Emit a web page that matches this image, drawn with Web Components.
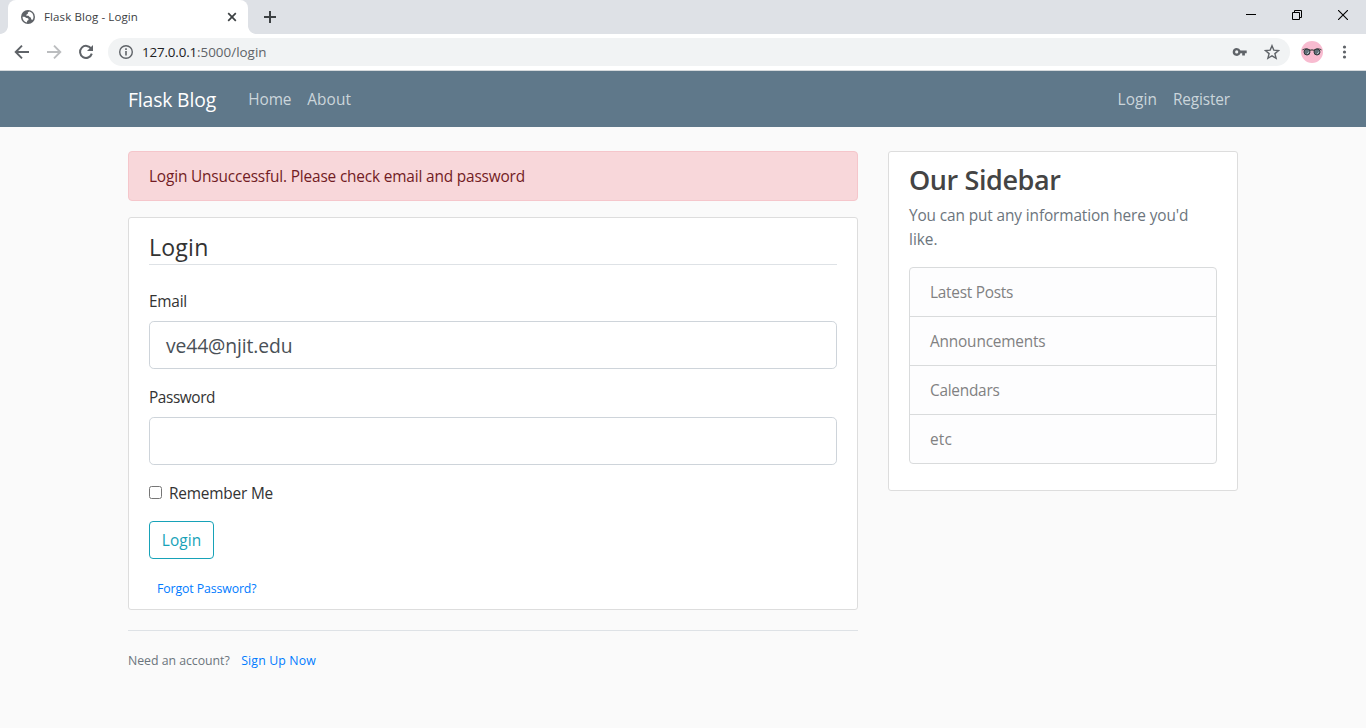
<!DOCTYPE html>
<html lang="en">
<head>
<meta charset="utf-8">
<title>Flask Blog - Login</title>
<style>
html, body { margin: 0; height: 100%; overflow: hidden; background: #fafafa; }
body { font-family: "Open Sans", "Noto Sans", sans-serif; color: #333; }
</style>
</head>
<body>
<browser-chrome></browser-chrome>
<site-nav></site-nav>
<blog-layout>
  <flash-alert><fit-text w="376">Login Unsuccessful. Please check email and password</fit-text></flash-alert>
  <login-card></login-card>
  <account-note></account-note>
  <side-bar slot="side"></side-bar>
</blog-layout>
<script>
const define = (name, html, setup) => {
  customElements.define(name, class extends HTMLElement {
    connectedCallback() {
      if (this.shadowRoot) return;
      const t = document.createElement('template');
      t.innerHTML = html;
      this.attachShadow({ mode: 'open' }).append(t.content.cloneNode(true));
      if (setup) setup(this);
    }
  });
};

// Inline text tracked to a given advance width.
define('fit-text', `<style>
:host { display: inline-block; flex: none; white-space: pre; }
</style><slot></slot>`, el => {
  const want = parseFloat(el.getAttribute('w'));
  const n = el.textContent.length;
  const track = () => {
    el.style.letterSpacing = '0px';
    const have = el.getBoundingClientRect().width;
    if (have > 0) {
      el.style.letterSpacing = ((want - have) / n) + 'px';
      el.style.width = want + 'px';
    }
  };
  requestAnimationFrame(track);
});

define('browser-chrome', `<style>
:host { display: block; height: 71px; background: #fff; color: #3c4043; }
svg { display: block; flex: none; }
.tabs { height: 34px; background: #dee1e6; display: flex; align-items: center; }
.tab { position: relative; box-sizing: border-box; width: 240px; height: 34px; margin-left: 8px; padding: 0 9px 0 13px; display: flex; align-items: center; background: #fff; border-radius: 8px 8px 0 0; font-size: 11.5px; }
.tab::before, .tab::after { content: ""; position: absolute; bottom: 0; width: 8px; height: 8px; }
.tab::before { left: -8px; background: radial-gradient(circle at 0 0, #dee1e6 7.5px, #fff 8.2px); }
.tab::after { right: -8px; background: radial-gradient(circle at 100% 0, #dee1e6 7.5px, #fff 8.2px); }
.tab fit-text { margin-left: 9px; padding-bottom: 2px; }
.spacer { flex: 1; }
.win { display: flex; width: 138px; height: 30px; align-items: center; align-self: flex-start; }
.win svg { margin: 0 18px; }
.bar { height: 36px; display: flex; align-items: center; border-bottom: 1px solid #d5d9dc; }
.omni { flex: 1; box-sizing: border-box; height: 28px; border-radius: 14px; background: #f1f3f4; display: flex; align-items: center; padding: 0 10px; font-size: 13.4px; color: #202124; }
.url { margin-left: 8px; flex: 1; display: flex; line-height: 20px; }
.url .rest { color: #5f6368; }
</style>
<div class="tabs">
  <div class="tab">
    <svg width="14" height="14" viewBox="0 0 14 14"><circle cx="7" cy="7" r="7" fill="#5f6368"/><path d="M8.300 1.500C7 2.200 6.300 2.900 7 3.500c.3.500-1.500.7-1.700 1.400-.1.700.4.900 1.300.8 1-.1 1.400.3 1.700 1 .4.700 1.400.4 1.700 1.200.2.600-.1 1.300.5 1.700l.9.4c.8-1 1.100-2 1.100-3.100C12.500 4.200 10.800 2 8.300 1.500zM1.500 6.700c0 2.800 1.700 5 4.400 5.700l.3-1.600c.9-.3 1.500-.8 1.300-1.800-.2-.9-1.100-1-2-1.100C4.500 7.800 4.300 6.800 3.300 6.700z" fill="#fff"/></svg>
    <fit-text w="94">Flask Blog - Login</fit-text>
    <span class="spacer"></span>
    <svg width="14" height="14" viewBox="0 0 14 14"><path d="M3.200 3.200l7.600 7.600M10.800 3.200l-7.600 7.600" stroke="#3c4043" stroke-width="1.700"/></svg>
  </div>
  <svg style="margin-left:15px" width="14" height="14" viewBox="0 0 14 14"><path d="M7 1v12M1 7h12" stroke="#3c4043" stroke-width="2"/></svg>
  <div class="spacer"></div>
  <div class="win">
    <svg width="10" height="10" viewBox="0 0 10 10"><path d="M0 4.500h10" stroke="#000"/></svg>
    <svg width="10" height="10" viewBox="0 0 10 10"><path d="M.5 2.500h7v7h-7zM2.500 2.500v-2h7v7h-2" fill="none" stroke="#000"/></svg>
    <svg width="10" height="10" viewBox="0 0 10 10"><path d="M0 0l10 10M10 0L0 10" stroke="#000" stroke-width="1.100"/></svg>
  </div>
</div>
<div class="bar">
  <svg style="margin-left:14px" width="16" height="16" viewBox="0 0 16 16"><path d="M15 8H2M8 1.700L1.700 8 8 14.300" fill="none" stroke="#5f6368" stroke-width="1.900"/></svg>
  <svg style="margin-left:16px" width="16" height="16" viewBox="0 0 16 16"><path d="M1 8h13M8 1.700L14.300 8 8 14.300" fill="none" stroke="#bbbdbf" stroke-width="1.900"/></svg>
  <svg style="margin-left:16px" width="16" height="16" viewBox="0 0 16 16"><path d="M13.200 4.800A6 6 0 1 0 13.800 9.600" fill="none" stroke="#5f6368" stroke-width="2"/><path d="M15 1v6H9z" fill="#5f6368"/></svg>
  <div class="omni" style="margin-left:14px">
    <svg width="16" height="16" viewBox="0 0 16 16"><circle cx="8" cy="8" r="6.300" fill="none" stroke="#5f6368" stroke-width="1.400"/><path d="M8 7v4.500M8 4.300v1.600" stroke="#5f6368" stroke-width="1.600"/></svg>
    <div class="url"><fit-text w="55">127.0.0.1</fit-text><fit-text class="rest" w="69.500">:5000/login</fit-text></div>
    <svg width="16" height="16" viewBox="0 0 16 16"><path d="M4.700 3.900a4 4 0 1 0 3.800 5.300h1.700v2.400h2.700V9.200h1.800V6.400H8.500a4 4 0 0 0-3.800-2.500zm0 2.400a1.600 1.600 0 1 1 0 3.200 1.600 1.600 0 0 1 0-3.200z" fill="#5f6368" fill-rule="evenodd"/></svg>
    <svg style="margin-left:16px" width="16" height="16" viewBox="0 0 16 16"><path d="M8 1.700l1.800 4.400 4.800.4-3.700 3.100 1.200 4.700L8 11.800l-4.100 2.500 1.200-4.700L1.400 6.500l4.800-.4z" fill="none" stroke="#5f6368" stroke-width="1.400"/></svg>
  </div>
  <svg style="margin-left:11px" width="22" height="22" viewBox="0 0 22 22"><circle cx="11" cy="11" r="11" fill="#f8bbd0"/><path d="M1.500 9.200Q3 7.800 5 7.800T9.300 9.300q1.700-.8 3.400 0 1.800-1.500 4.300-1.500t3.500 1.400" fill="none" stroke="#424242" stroke-width="1.100"/><circle cx="6" cy="11" r="3" fill="#607078" stroke="#33393d"/><circle cx="16" cy="11" r="3" fill="#607078" stroke="#33393d"/><path d="M6 12.800q1.600-.4 1.800-2.200M16 12.800q1.600-.4 1.800-2.200" fill="none" stroke="#b4c3c9"/></svg>
  <svg style="margin:0 14px 0 13px" width="16" height="16" viewBox="0 0 16 16"><g fill="#5f6368"><circle cx="8.500" cy="3" r="1.600"/><circle cx="8.500" cy="8" r="1.600"/><circle cx="8.500" cy="13" r="1.600"/></g></svg>
</div>`);

define('site-nav', `<style>
:host { display: block; background: #5f788a; height: 56px; }
nav { box-sizing: border-box; width: 1140px; height: 56px; margin: 0 auto; padding: 0 15px; display: flex; align-items: center; color: #cbd5db; font-size: 15.400px; line-height: 24px; }
.brand { color: #fff; font-size: 19.300px; line-height: 30px; padding-top: 1px; margin-right: 32.300px; }
.gap { flex: 1; }
.link { margin-right: 16px; padding-top: 2px; }
.last { margin-right: 8px; padding-top: 2px; }
</style>
<nav>
  <fit-text class="brand" w="88">Flask Blog</fit-text>
  <fit-text class="link" w="43">Home</fit-text>
  <fit-text class="link" w="43.700">About</fit-text>
  <span class="gap"></span>
  <fit-text class="link" w="39.500">Login</fit-text>
  <fit-text class="last" w="57">Register</fit-text>
</nav>`);

define('blog-layout', `<style>
:host { box-sizing: border-box; width: 1110px; margin: 24px auto 0; display: grid; grid-template-columns: 730px 350px; gap: 30px; align-items: start; }
main, aside { display: block; }
</style><main><slot></slot></main><aside><slot name="side"></slot></aside>`);

define('flash-alert', `<style>
:host { box-sizing: border-box; display: block; height: 50px; padding: 13px 20px 11px; border: 1px solid #f5c6cb; border-radius: 4px; background: #f8d7da; color: #721c24; font-size: 15.400px; line-height: 24px; margin-bottom: 16px; }
</style><slot></slot>`);

define('form-field', `<style>
:host { display: block; margin-bottom: 16px; font-size: 15.400px; line-height: 24px; }
label { display: block; height: 24px; padding-top: 1px; margin-bottom: 7px; }
.box { box-sizing: border-box; height: 48px; padding: 9px 16px 7px; border: 1px solid #ced4da; border-radius: 4.800px; background: #fff; color: #495057; font-size: 19.300px; line-height: 30px; }
</style><label><slot></slot></label><div class="box"><slot name="value"></slot></div>`);

define('login-card', `<style>
:host { box-sizing: border-box; display: block; height: 393px; padding: 10px 20px; border: 1px solid #ddd; border-radius: 3px; background: #fff; font-size: 15.400px; line-height: 24px; color: #333; }
.legend { height: 36px; line-height: 38px; font-size: 23.100px; border-bottom: 1px solid #dee2e6; margin-bottom: 24px; }
.check { display: flex; align-items: center; height: 24px; margin-bottom: 16px; }
.check fit-text { padding-top: 2px; }
input { width: 13px; height: 13px; margin: 0 7px 2px 0; }
button { display: block; box-sizing: border-box; width: 65px; height: 38px; padding: 2px 0 0; border: 1px solid #17a2b8; border-radius: 4px; background: transparent; color: #17a2b8; font: inherit; }
.forgot { display: block; margin: 18px 0 0 8px; height: 24px; font-size: 12.300px; color: #007bff; }
</style>
<div class="legend"><fit-text w="59.500">Login</fit-text></div>
<form-field><fit-text w="38">Email</fit-text><fit-text slot="value" w="126.500">ve44@njit.edu</fit-text></form-field>
<form-field><fit-text w="66">Password</fit-text></form-field>
<div class="check"><input type="checkbox"><fit-text w="104">Remember Me</fit-text></div>
<button><fit-text w="39.500">Login</fit-text></button>
<div class="forgot"><fit-text w="99.500">Forgot Password?</fit-text></div>`);

define('account-note', `<style>
:host { display: block; margin-top: 20px; padding-top: 18px; border-top: 1px solid #dee2e6; font-size: 12.300px; line-height: 24px; color: #6c757d; }
.link { color: #007bff; margin-left: 11.500px; }
div { display: flex; }
</style><div><fit-text w="101.700">Need an account?</fit-text><fit-text class="link" w="74.700">Sign Up Now</fit-text></div>`);

define('side-bar', `<style>
:host { box-sizing: border-box; display: block; height: 340px; padding: 10px 20px; border: 1px solid #ddd; border-radius: 3px; background: #fff; font-size: 15.400px; line-height: 24px; color: #6c757d; }
h3 { margin: 0 0 8px; height: 33px; line-height: 36px; font-size: 27px; font-weight: 600; color: #444; }
p { margin: 0 0 15px; height: 48px; padding-top: 1px; display: flex; flex-direction: column; align-items: flex-start; }
ul { list-style: none; margin: 0; padding: 0; border: 1px solid #d9dbdc; border-radius: 4px; background: #fdfdfe; color: #818182; overflow: hidden; }
li { height: 24px; padding: 13px 20px 11px; border-bottom: 1px solid #d9dbdc; }
li:last-child { border: 0; }
</style>
<h3><fit-text w="151.500">Our Sidebar</fit-text></h3>
<p><fit-text w="279.300">You can put any information here you'd</fit-text><fit-text w="28.500">like.</fit-text></p>
<ul>
  <li><fit-text w="83">Latest Posts</fit-text></li>
  <li><fit-text w="115.500">Announcements</fit-text></li>
  <li><fit-text w="69.500">Calendars</fit-text></li>
  <li><fit-text w="22">etc</fit-text></li>
</ul>`);
</script>
</body>
</html>
